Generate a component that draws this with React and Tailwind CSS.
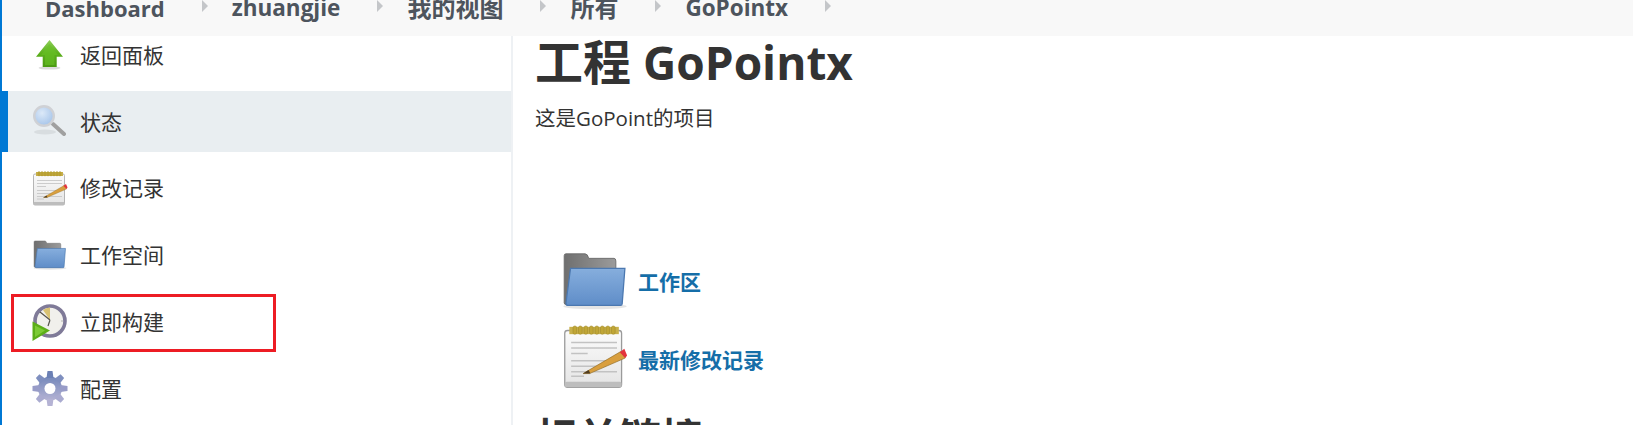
import React from 'react';

const font = 'font-["Open_Sans","Noto_Sans_CJK_SC",sans-serif]';

function UpIcon({ className }) {
  return (
    <svg viewBox="0 0 36 36" className={className}>
      <defs>
        <linearGradient id="upg" x1="0" y1="0" x2="0" y2="1">
          <stop offset="0" stopColor="#8fd05a" />
          <stop offset="0.5" stopColor="#5cb01c" />
          <stop offset="1" stopColor="#4a9a12" />
        </linearGradient>
      </defs>
      <ellipse cx="17.5" cy="31" rx="11" ry="1.6" fill="#000" opacity="0.14" />
      <path d="M17.5 3 L31 19.7 L24.7 19.7 L24.7 30 L10.7 30 L10.7 19.7 L4 19.7 Z" fill="url(#upg)" />
      <path d="M17.5 7 L26 18 L22.5 18 L22.5 28 L13 28 L13 18 L9 18 Z" fill="#68c224" opacity="0.6" />
    </svg>
  );
}

function SearchIcon({ className }) {
  return (
    <svg viewBox="0 0 36 36" className={className}>
      <defs>
        <radialGradient id="lens" cx="0.4" cy="0.35" r="0.75">
          <stop offset="0" stopColor="#dce9f8" />
          <stop offset="1" stopColor="#9fc0e8" />
        </radialGradient>
      </defs>
      <ellipse cx="13" cy="28" rx="11" ry="2.4" fill="#000" opacity="0.07" />
      <path d="M21 20 L32 30" stroke="#a0a0a0" strokeWidth="4" strokeLinecap="round" />
      <circle cx="12" cy="12" r="9.8" fill="url(#lens)" stroke="#cfd1d5" strokeWidth="2.4" />
    </svg>
  );
}

function NotepadIcon({ className }) {
  const rings = [7, 10, 13, 16, 19, 22, 25, 28];
  return (
    <svg viewBox="0 0 36 36" className={className}>
      <defs>
        <linearGradient id="paper" x1="0" y1="0" x2="0" y2="1">
          <stop offset="0" stopColor="#fbfbfb" />
          <stop offset="1" stopColor="#e4e4e4" />
        </linearGradient>
      </defs>
      <rect x="1.5" y="3" width="31" height="31" rx="1.5" fill="url(#paper)" stroke="#9a9a9a" strokeWidth="0.7" />
      <rect x="1.5" y="31" width="31" height="3" rx="1" fill="#bdbdbd" />
      <rect x="4" y="1" width="27" height="4" fill="#c8b04a" />
      {rings.map((x) => (
        <rect key={x} x={x - 1} y="0.5" width="2" height="4.6" rx="1" fill="#c0a636" stroke="#978225" strokeWidth="0.25" />
      ))}
      <path d="M5 9.5 H30 M5 12.5 H30 M5 15.5 H14 M5 19.5 H28 M5 22.5 H24 M5 25.5 H30 M5 28 H12" stroke="#c2c2c2" strokeWidth="0.8" />
      <path d="M11.5 26.5 L32 14.5 L34.5 18 L15 26.5 Z" fill="#d99f3e" stroke="#8f6a24" strokeWidth="0.35" />
      <path d="M31.5 14.8 L34 13 L35.5 16.6 L34.5 18 Z" fill="#e3333c" />
      <path d="M11.5 26.5 L14.5 24.6 L15.5 26.4 Z" fill="#4f3d22" />
    </svg>
  );
}

function FolderIcon({ className }) {
  return (
    <svg viewBox="0 0 36 32" className={className}>
      <defs>
        <linearGradient id="fback" x1="0" y1="0" x2="1" y2="0">
          <stop offset="0" stopColor="#6f6f6f" />
          <stop offset="1" stopColor="#9b9b9b" />
        </linearGradient>
        <linearGradient id="ffront" x1="0" y1="0" x2="0" y2="1">
          <stop offset="0" stopColor="#86aedd" />
          <stop offset="1" stopColor="#5f8dc8" />
        </linearGradient>
      </defs>
      <ellipse cx="18" cy="30" rx="17.5" ry="1.6" fill="#000" opacity="0.1" />
      <path d="M1 2 Q1 1 2 1 H12.5 Q14 1 14.5 3.5 H28.5 Q29.5 3.5 29.5 5 V29 H2 Q1 29 1 28 Z" fill="url(#fback)" stroke="#6a6a6a" strokeWidth="0.5" />
      <path d="M4.5 9 H34.5 L33 28.5 Q33 29.5 32 29.5 H3 Q2 29.5 2 28 Z" fill="url(#ffront)" stroke="#4b78b0" strokeWidth="0.7" />
    </svg>
  );
}

function BuildIcon({ className }) {
  return (
    <svg viewBox="0 0 36 38" className={className}>
      <circle cx="18" cy="18" r="15" fill="#f1f0ec" stroke="#7f7a98" strokeWidth="3.6" />
      <path d="M18 17 L11 7 A14 14 0 0 1 18 4.5 Z" fill="#d9c272" />
      <path d="M18 17 L8 9 M18 17 L16 23" stroke="#55524c" strokeWidth="1.2" />
      <circle cx="30" cy="18" r="0.8" fill="#aaa" />
      <path d="M0.5 18.5 L18 27.5 L0.5 38 Z" fill="#5cae18" />
      <path d="M3 22.5 L13 27.5 L3 34 Z" fill="#7ccb34" />
    </svg>
  );
}

function GearIcon({ className }) {
  const teeth = [
    [0, '#6b80b5'],
    [45, '#7f8fbf'],
    [90, '#989cc8'],
    [135, '#aaabd0'],
    [180, '#b5b3d4'],
    [225, '#aaabd0'],
    [270, '#989cc8'],
    [315, '#7f8fbf'],
  ];
  return (
    <svg viewBox="0 0 36 37" className={className}>
      <defs>
        <linearGradient id="gear" x1="0" y1="0" x2="0" y2="1">
          <stop offset="0" stopColor="#7488ba" />
          <stop offset="1" stopColor="#b5b3d4" />
        </linearGradient>
      </defs>
      <circle cx="18" cy="18.5" r="12" fill="url(#gear)" />
      {teeth.map(([a, c]) => (
        <path key={a} d="M14.5 8 L15.5 1 H20.5 L21.5 8 Z" fill={c} transform={`rotate(${a} 18 18.5)`} />
      ))}
      <circle cx="18" cy="18.5" r="5.5" fill="#fff" />
    </svg>
  );
}

const items = [
  { label: '返回面板', Icon: UpIcon, size: 'w-[36px] h-[36px]' },
  { label: '状态', Icon: SearchIcon, size: 'w-[36px] h-[36px]', active: true },
  { label: '修改记录', Icon: NotepadIcon, size: 'w-[36px] h-[36px]' },
  { label: '工作空间', Icon: FolderIcon, size: 'w-[34px] h-[30px]' },
  { label: '立即构建', Icon: BuildIcon, size: 'w-[36px] h-[38px]' },
  { label: '配置', Icon: GearIcon, size: 'w-[36px] h-[37px]' },
];

const crumbs = [
  { text: 'Dashboard', size: 'text-[22px]' },
  { text: 'zhuangjie', size: 'text-[22.5px]' },
  { text: '我的视图', size: 'text-[24px]' },
  { text: '所有', size: 'text-[24px]' },
  { text: 'GoPointx', size: 'text-[22.5px]' },
];

function SideItem({ label, Icon, size, active }) {
  return (
    <div className={`flex items-center h-[61px] border-l-[6px] pl-[24px] ${active ? 'bg-[#e9eef1] border-[#0078d4]' : 'border-transparent'}`}>
      <div className="w-[36px] flex justify-center shrink-0">
        <Icon className={`${size} blur-[0.5px]`} />
      </div>
      <span className="ml-[12px] pt-[1px] text-[21px] text-[#333]">{label}</span>
    </div>
  );
}

export default function App() {
  return (
    <div className={`h-[425px] w-[1633px] overflow-hidden bg-white border-l-2 border-[#0078d4] flex flex-col ${font}`}>
      <div className="h-[36px] shrink-0 bg-[#f8f8f8] overflow-hidden pl-[43px]">
        <div className="flex items-center -mt-[9px] h-[34px]">
          {crumbs.map((c) => (
            <div key={c.text} className="flex items-center">
              <span className={`${c.size} font-bold text-[#4d545d] whitespace-nowrap leading-[34px]`}>{c.text}</span>
              <span className="ml-[37px] mr-[24px] -translate-y-[2px] w-0 h-0 border-y-[6px] border-y-transparent border-l-[6px] border-l-[#c4c6c9]" />
            </div>
          ))}
        </div>
      </div>

      <div className="flex flex-1 min-h-0">
        <aside className="relative w-[511px] shrink-0 border-r-2 border-[#eef1f4]">
          <div className="h-full overflow-hidden">
            <div className="flex flex-col gap-[5.8px] -mt-[11.5px]">
              {items.map((it) => (
                <SideItem key={it.label} {...it} />
              ))}
            </div>
          </div>
          <div className="absolute left-[9px] top-[258px] w-[265px] h-[58px] border-[3px] border-[#ed1c24]" />
        </aside>

        <main className="flex-1 min-w-0 overflow-hidden pl-[22px]">
          <h1 className="font-bold text-[#333] leading-[52px] whitespace-nowrap text-[46px]">
            <span className="text-[48px]">工程</span> GoPointx
          </h1>
          <p className="mt-[17px] text-[20.5px] leading-[26px] text-[#333]">这是GoPoint的项目</p>
          <div className="mt-[120px] ml-[27px] flex flex-col">
            <div className="flex items-center h-[60px]">
              <FolderIcon className="w-[66px] h-[58px] blur-[0.3px]" />
              <a className="ml-[10px] mt-[4px] text-[21px] font-bold text-[#156ea8]">工作区</a>
            </div>
            <div className="flex items-center h-[66px] mt-[14px]">
              <NotepadIcon className="w-[66px] h-[66px] blur-[0.3px]" />
              <a className="ml-[10px] mt-[6px] text-[21px] font-bold text-[#156ea8]">最新修改记录</a>
            </div>
          </div>
          <h2 className="mt-[22px] text-[42px] font-bold text-[#333] leading-[50px]">相关链接</h2>
        </main>
      </div>
    </div>
  );
}
